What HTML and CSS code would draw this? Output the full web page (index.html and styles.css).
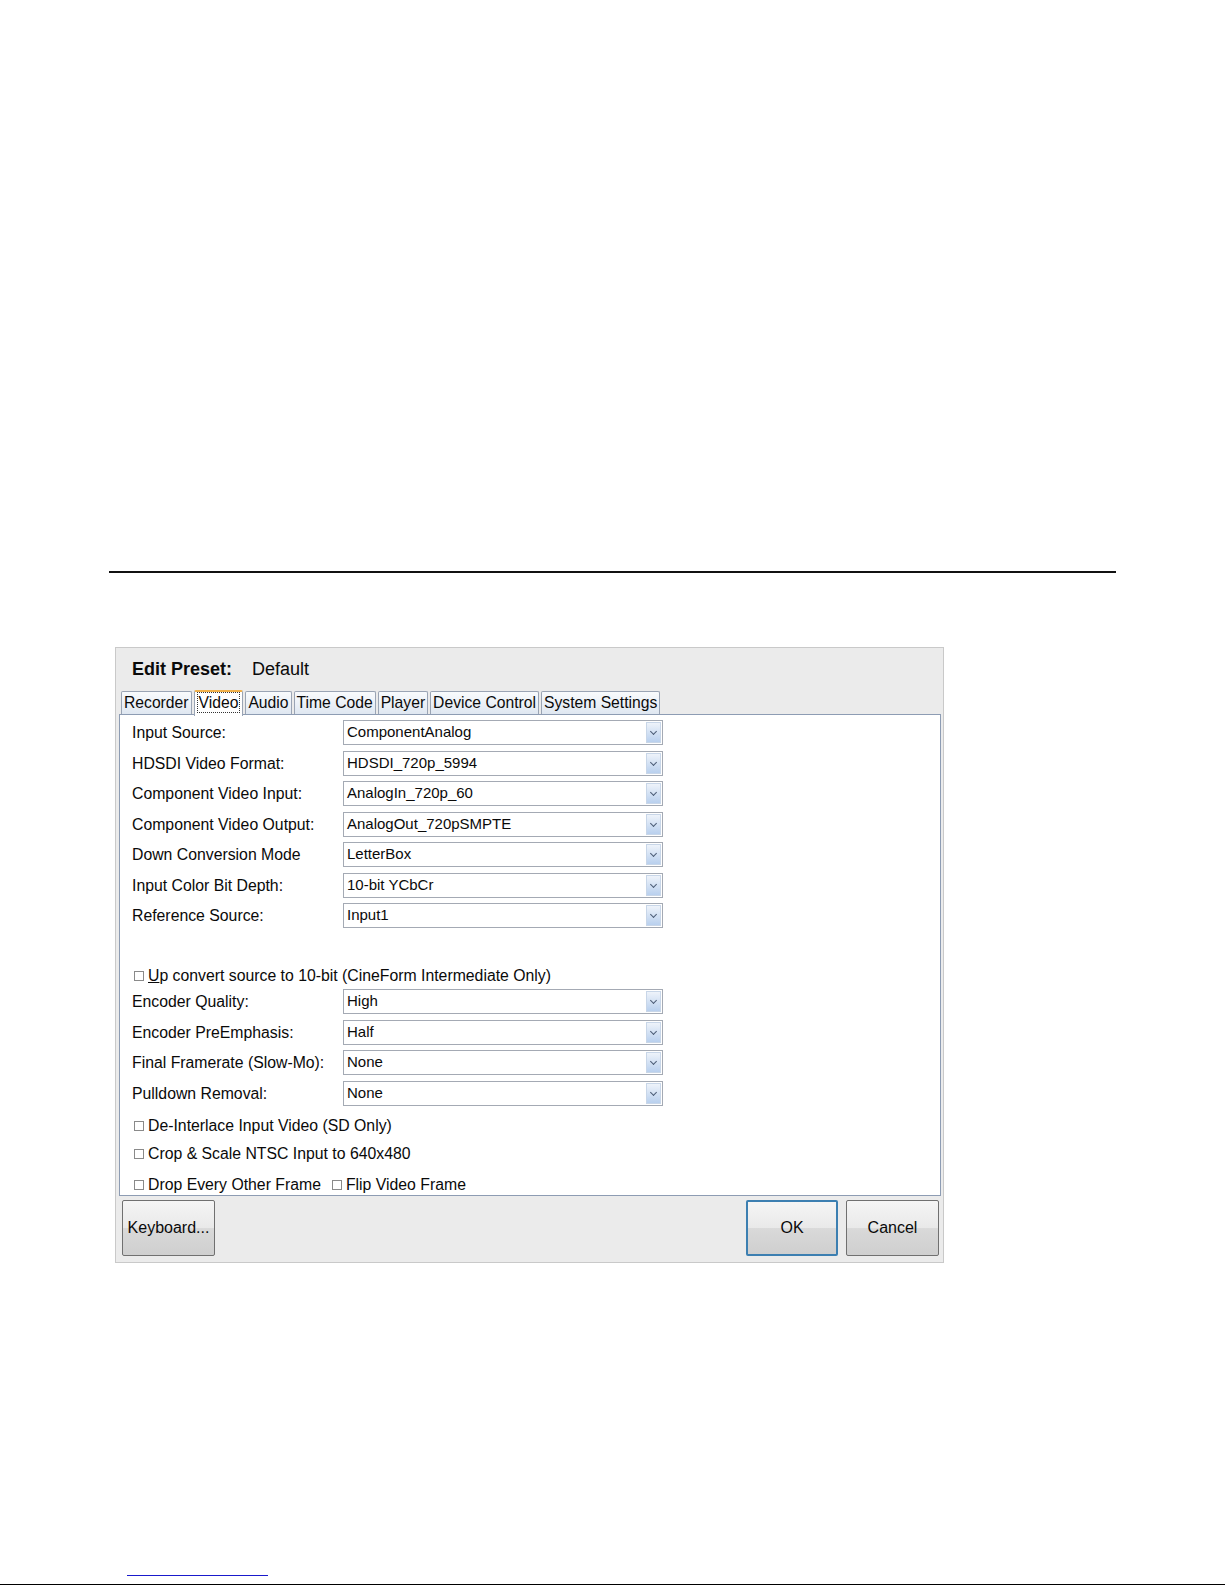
FILE: index.html
```html
<!DOCTYPE html>
<html lang="en">

<head>
    <meta charset="UTF-8">
    <title>Edit Preset</title>
    <link rel="stylesheet" href="styles.css">
</head>

<body>
    <div class="page">
        <hr class="rule">

        <div class="dialog">
            <div class="dialog-title">
                <span class="title-label">Edit Preset:</span>
                <span class="title-value">Default</span>
            </div>

            <div class="tabs">
                <div class="tab">Recorder</div>
                <div class="tab active"><span class="focus">Video</span></div>
                <div class="tab">Audio</div>
                <div class="tab">Time Code</div>
                <div class="tab">Player</div>
                <div class="tab">Device Control</div>
                <div class="tab">System Settings</div>
            </div>

            <div class="panel">
                <div class="rows">
                    <div class="label">Input Source:</div>
                    <div class="select"><span>ComponentAnalog</span><i class="arrow"></i></div>
                    <div class="label">HDSDI Video Format:</div>
                    <div class="select"><span>HDSDI_720p_5994</span><i class="arrow"></i></div>
                    <div class="label">Component Video Input:</div>
                    <div class="select"><span>AnalogIn_720p_60</span><i class="arrow"></i></div>
                    <div class="label">Component Video Output:</div>
                    <div class="select"><span>AnalogOut_720pSMPTE</span><i class="arrow"></i></div>
                    <div class="label">Down Conversion Mode</div>
                    <div class="select"><span>LetterBox</span><i class="arrow"></i></div>
                    <div class="label">Input Color Bit Depth:</div>
                    <div class="select"><span>10-bit YCbCr</span><i class="arrow"></i></div>
                    <div class="label">Reference Source:</div>
                    <div class="select"><span>Input1</span><i class="arrow"></i></div>
                </div>

                <div class="check upconvert"><i class="box"></i><span><u>U</u>p convert source to 10-bit (CineForm Intermediate Only)</span></div>

                <div class="rows rows-second">
                    <div class="label">Encoder Quality:</div>
                    <div class="select"><span>High</span><i class="arrow"></i></div>
                    <div class="label">Encoder PreEmphasis:</div>
                    <div class="select"><span>Half</span><i class="arrow"></i></div>
                    <div class="label">Final Framerate (Slow-Mo):</div>
                    <div class="select"><span>None</span><i class="arrow"></i></div>
                    <div class="label">Pulldown Removal:</div>
                    <div class="select"><span>None</span><i class="arrow"></i></div>
                </div>

                <div class="check deinterlace"><i class="box"></i><span>De-Interlace Input Video (SD Only)</span></div>
                <div class="check crop"><i class="box"></i><span>Crop &amp; Scale NTSC Input to 640x480</span></div>
                <div class="check-line">
                    <div class="check"><i class="box"></i><span>Drop Every Other Frame</span></div>
                    <div class="check"><i class="box"></i><span>Flip Video Frame</span></div>
                </div>
            </div>

            <div class="button-bar">
                <button class="btn">Keyboard...</button>
                <div class="btn-group">
                    <button class="btn default">OK</button>
                    <button class="btn">Cancel</button>
                </div>
            </div>
        </div>

        <div class="footer">
            <a href="#" class="footer-link"></a>
        </div>
    </div>
</body>

</html>
```

FILE: styles.css
```css
:root {
    --dialog-bg: #ebebeb;
    --dialog-border: #c9c9c9;
    --panel-border: #8d9cb3;
    --field-border: #a4aab4;
    --text-color: #0a0a0a;
    --ui-font: 'Liberation Sans', Arial, sans-serif;
}

* {
    margin: 0;
    padding: 0;
    box-sizing: border-box;
}

body {
    background: #fff;
    font-family: var(--ui-font);
    color: var(--text-color);
}

.page {
    width: 1225px;
    padding-top: 571px;
}

.rule {
    border: none;
    border-top: 2px solid #111;
    margin: 0 109px;
}

/* dialog */

.dialog {
    width: 829px;
    height: 616px;
    margin: 74px 0 0 115px;
    background: var(--dialog-bg);
    border: 1px solid var(--dialog-border);
    display: flex;
    flex-direction: column;
}

.dialog-title {
    height: 43px;
    padding: 10px 0 0 16px;
    font-size: 18px;
    line-height: 22px;
    display: flex;
    gap: 20px;
}

.title-label {
    font-weight: bold;
}

.tabs {
    display: flex;
    gap: 2px;
    height: 23px;
    padding-left: 5px;
    position: relative;
    z-index: 1;
}

.tab {
    height: 23px;
    padding: 0 2px;
    font-size: 15.7px;
    line-height: 22px;
    border: 1px solid #9aa4b4;
    border-bottom: none;
    border-radius: 2px 2px 0 0;
    background: linear-gradient(#f9fbfd, #dfe7f1);
}

.tab.active {
    height: 26px;
    margin-top: -1px;
    background: #fff;
    border-top: 2px solid #f0b04a;
    line-height: 21px;
}

.tab .focus {
    display: inline-block;
    line-height: 19px;
    border: 1px dotted #333;
    padding: 0 1px;
}

/* panel */

.panel {
    height: 482px;
    margin: 0 2px 0 3px;
    background: #fff;
    border: 1px solid var(--panel-border);
    padding: 5px 0 0 12px;
    overflow: hidden;
}

.rows {
    display: grid;
    grid-template-columns: 211px 320px;
    grid-auto-rows: 25px;
    row-gap: 5.5px;
    align-items: center;
}

.rows-second {
    margin-top: 3px;
}

.label {
    font-size: 15.8px;
    line-height: 25px;
}

.select {
    height: 25px;
    border: 1px solid var(--field-border);
    display: flex;
    font-size: 15px;
    line-height: 22px;
    background: #fff;
}

.select span {
    flex: 1;
    padding-left: 3px;
}

.select .arrow {
    width: 15px;
    margin: 1px;
    background: linear-gradient(#eef3fa, #b9d0ee);
    border: 1px solid #c8d6e8;
    position: relative;
}

.select .arrow::after {
    content: "";
    position: absolute;
    left: 4px;
    top: 6px;
    width: 4px;
    height: 4px;
    border-right: 1.5px solid #4d5d76;
    border-bottom: 1.5px solid #4d5d76;
    transform: rotate(45deg);
}

/* checkboxes */

.check {
    display: flex;
    align-items: center;
    gap: 4px;
    height: 20px;
    font-size: 15.8px;
    padding-left: 2px;
}

.check .box {
    width: 10px;
    height: 10px;
    border: 1px solid #8a8a8a;
    background: #fff;
}

.upconvert {
    margin-top: 38px;
}

.deinterlace {
    margin-top: 10.5px;
}

.crop {
    margin-top: 8px;
}

.check-line {
    display: flex;
    gap: 9px;
    margin-top: 11px;
}

/* buttons */

.button-bar {
    flex: 1;
    display: flex;
    justify-content: space-between;
    padding: 4px 4px 0 6px;
}

.btn-group {
    display: flex;
    gap: 8px;
}

.btn {
    height: 56px;
    width: 93px;
    font-family: var(--ui-font);
    font-size: 16px;
    color: var(--text-color);
    border: 1px solid #707070;
    border-radius: 2px;
    background: linear-gradient(#f5f5f5 0%, #e9e9e9 50%, #d9d9d9 51%, #cfcfcf 100%);
}

.btn.default {
    width: 92px;
    border: 2px solid #3c7fb1;
}

/* footer */

.footer {
    margin-top: 312px;
    height: 11px;
    border-bottom: 2px solid #000;
    padding-left: 127px;
}

.footer-link {
    display: block;
    width: 141px;
    border-top: 1px solid #1a1acc;
    height: 1px;
}
```
